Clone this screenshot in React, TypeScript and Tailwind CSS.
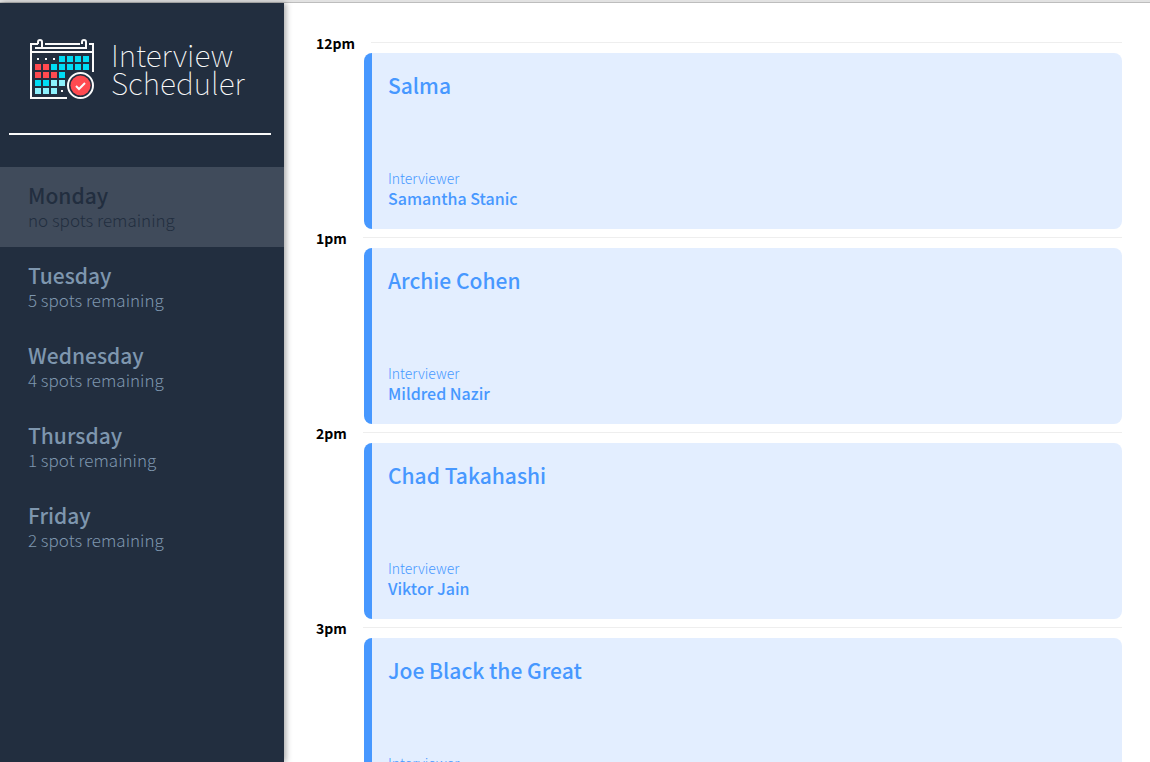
import { useState } from "react";

type Day = { name: string; spots: number };
type Appointment = { time: string; student: string; interviewer: string };

const days: Day[] = [
  { name: "Monday", spots: 0 },
  { name: "Tuesday", spots: 5 },
  { name: "Wednesday", spots: 4 },
  { name: "Thursday", spots: 1 },
  { name: "Friday", spots: 2 },
];

const appointments: Appointment[] = [
  { time: "12pm", student: "Salma", interviewer: "Samantha Stanic" },
  { time: "1pm", student: "Archie Cohen", interviewer: "Mildred Nazir" },
  { time: "2pm", student: "Chad Takahashi", interviewer: "Viktor Jain" },
  { time: "3pm", student: "Joe Black the Great", interviewer: "Mildred Nazir" },
];

function spotsLabel(spots: number) {
  if (spots === 0) return "no spots remaining";
  return spots === 1 ? "1 spot remaining" : `${spots} spots remaining`;
}

// Calendar cells: r = red, c = cyan, l = light cyan, d = dot
const cells = ["dddcccc", "rrccccc", "rrrc", "ccll", "llld"];
const cellColumns = [35, 43, 51, 59, 67, 75, 83];
const cellFill: Record<string, string> = { r: "#ff4a50", c: "#00dcf5", l: "#8cf1fd" };

function CalendarLogo() {
  return (
    <svg className="h-[64px] w-[68px] shrink-0" viewBox="28 37 68 64" aria-hidden="true">
      <g fill="none" stroke="#fafafa" strokeWidth="2">
        <path d="M38 44H31V98H67" />
        <path d="M45 44H80M89 44H93V72" />
        <path d="M35 48H87M30 52H94" />
        <path d="M38 44V42A2 2 0 0 1 42 42V48" />
        <path d="M82 44V42A2 2 0 0 1 86 42V48" />
      </g>
      {cells.map((row, y) =>
        row.split("").map((cell, x) =>
          cell === "d" ? (
            <rect key={`${x}-${y}`} x={cellColumns[x] + 2} y={56 + y * 8 + 2} width="2" height="2" fill="#fafafa" />
          ) : (
            <rect key={`${x}-${y}`} x={cellColumns[x]} y={56 + y * 8} width="6" height="6" fill={cellFill[cell]} />
          ),
        ),
      )}
      <circle cx="80.500" cy="85.500" r="14" fill="#222e3f" />
      <circle cx="80.500" cy="85.500" r="12.500" fill="#222e3f" stroke="#fafafa" strokeWidth="2" />
      <circle cx="80.500" cy="85.500" r="10" fill="#ff4a50" />
      <path d="M76 86L79 89L85 83" fill="none" stroke="#fafafa" strokeWidth="2" />
    </svg>
  );
}

function Sidebar() {
  const [selected, setSelected] = useState("Monday");
  return (
    <aside className="z-10 flex w-[284px] shrink-0 flex-col bg-[#222e3f] shadow-[2px_0_6px_rgba(0,0,0,0.35)]">
      <header className="flex items-start gap-[15px] pt-[34px] pl-7">
        <CalendarLogo />
        <h1 className="pt-[3px] text-[30px] leading-[28px] font-thin text-[#fafafa]">
          Interview
          <br />
          Scheduler
        </h1>
      </header>
      <hr className="mr-[13px] ml-[9px] mt-8 mb-8 border-0 border-t-2 border-[#fafafa]" />
      <nav aria-label="Days">
        <ul>
          {days.map((day) => (
            <li key={day.name}>
              <button
                type="button"
                aria-pressed={selected === day.name}
                onClick={() => setSelected(day.name)}
                className={`flex h-20 w-full flex-col items-start justify-center pl-7 text-left ${
                  selected === day.name ? "bg-[#404b5b]" : "hover:bg-[#2c394b]"
                } ${day.spots === 0 ? "text-[#222e3f]" : "text-[#7e96ae]"}`}
              >
                <span className="text-[21px] leading-[26px] font-medium">{day.name}</span>
                <span className="text-[17px] leading-[24px] font-light">{spotsLabel(day.spots)}</span>
              </button>
            </li>
          ))}
        </ul>
      </nav>
    </aside>
  );
}

function AppointmentRow({ time, student, interviewer }: Appointment) {
  return (
    <article>
      <header className="flex h-[19px] items-start gap-4">
        <h2 className="text-[14px] leading-[18px] font-bold text-black">{time}</h2>
        <hr className="mt-2 grow border-0 border-t border-[#eeeeee]" />
      </header>
      <div className="ml-12 flex h-[176px] flex-col justify-between rounded-lg border-l-8 border-[#4798ff] bg-[#e3eeff] pt-4 pb-[21px] pl-4 text-[#4798ff]">
        <h3 className="text-[21px] leading-8 font-medium">{student}</h3>
        <section>
          <h4 className="text-[14px] leading-[20px] font-light">Interviewer</h4>
          <p className="text-[16px] leading-[20px] font-medium">{interviewer}</p>
        </section>
      </div>
    </article>
  );
}

export default function App() {
  return (
    <div className="flex h-screen flex-col overflow-hidden bg-white font-['Noto_Sans_CJK_JP',sans-serif]">
      <div className="h-[3px] shrink-0 border-b border-[#bdbdbd] bg-[#e2e2e2]" />
      <div className="flex min-h-0 grow">
        <Sidebar />
        <main className="grow overflow-y-auto pt-[31px] pr-7 pb-8 pl-8 [scrollbar-width:none]">
          {appointments.map((appointment) => (
            <AppointmentRow key={appointment.time} {...appointment} />
          ))}
        </main>
      </div>
    </div>
  );
}
